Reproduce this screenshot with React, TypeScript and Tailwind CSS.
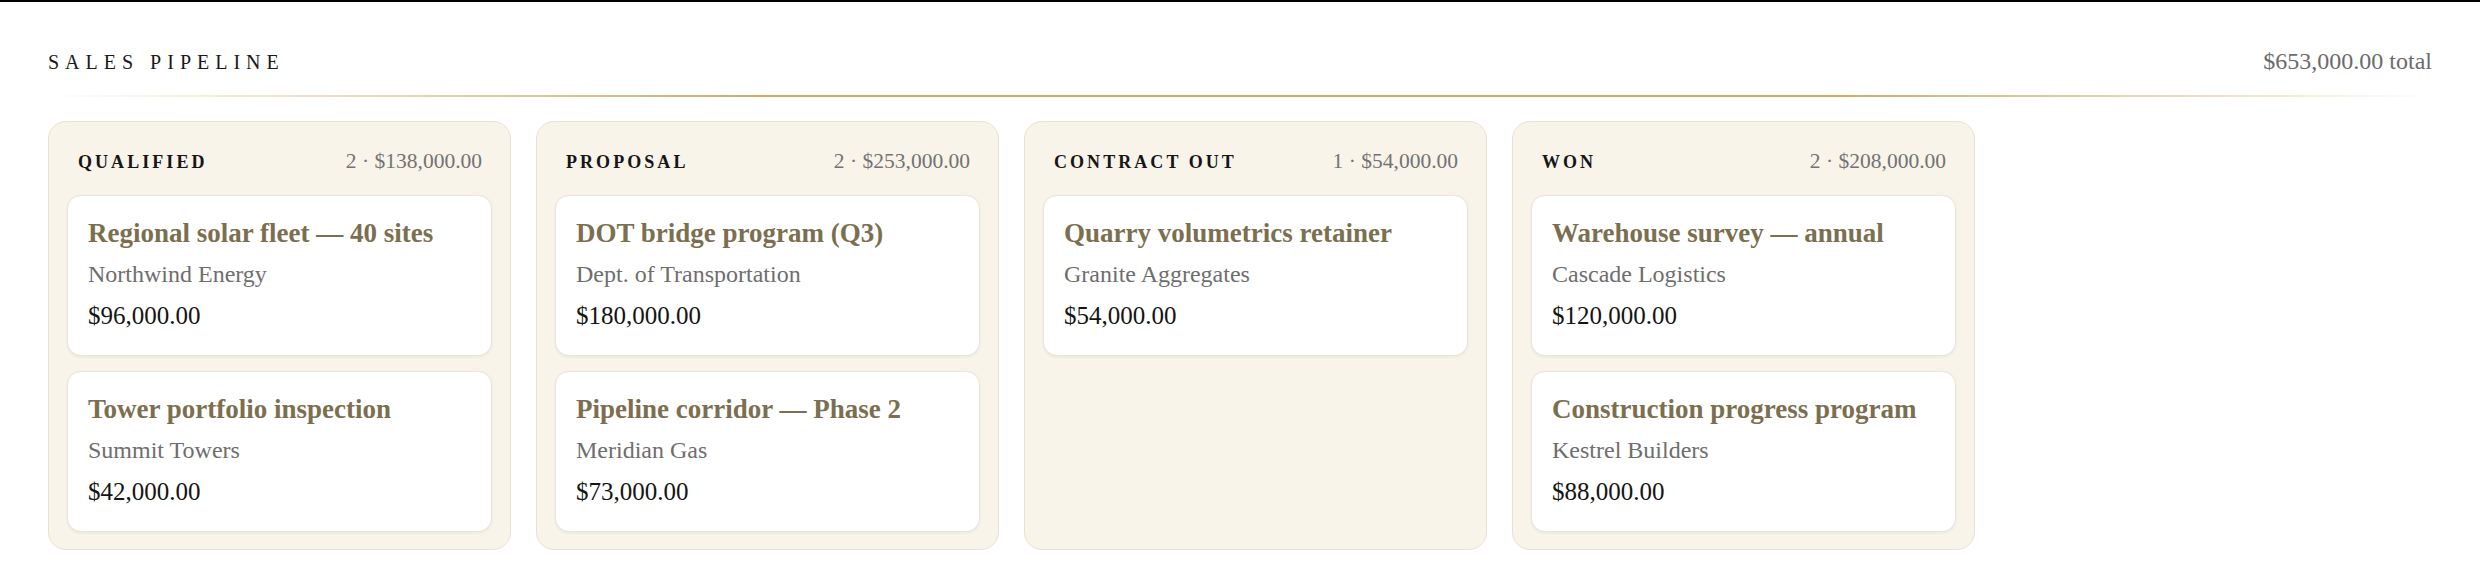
import React from 'react';

interface Deal {
  id: string;
  title: string;
  company: string;
  value: number;
}

interface Stage {
  id: string;
  name: string;
  deals: Deal[];
}

const stages: Stage[] = [
  {
    id: 'qualified',
    name: 'Qualified',
    deals: [
      { id: 'd1', title: 'Regional solar fleet — 40 sites', company: 'Northwind Energy', value: 96000 },
      { id: 'd2', title: 'Tower portfolio inspection', company: 'Summit Towers', value: 42000 },
    ],
  },
  {
    id: 'proposal',
    name: 'Proposal',
    deals: [
      { id: 'd3', title: 'DOT bridge program (Q3)', company: 'Dept. of Transportation', value: 180000 },
      { id: 'd4', title: 'Pipeline corridor — Phase 2', company: 'Meridian Gas', value: 73000 },
    ],
  },
  {
    id: 'contract',
    name: 'Contract out',
    deals: [
      { id: 'd5', title: 'Quarry volumetrics retainer', company: 'Granite Aggregates', value: 54000 },
    ],
  },
  {
    id: 'won',
    name: 'Won',
    deals: [
      { id: 'd6', title: 'Warehouse survey — annual', company: 'Cascade Logistics', value: 120000 },
      { id: 'd7', title: 'Construction progress program', company: 'Kestrel Builders', value: 88000 },
    ],
  },
];

const money = (n: number) =>
  '$' + n.toLocaleString('en-US', { minimumFractionDigits: 2, maximumFractionDigits: 2 });

function DealCard({ deal }: { deal: Deal }) {
  return (
    <div className="rounded-[14px] border border-[#ebe6d8] bg-white p-5 shadow-[0_1px_3px_rgba(60,50,20,0.08)]">
      <div className="text-[27px] font-bold leading-[34px] text-[#7b6f4f]">{deal.title}</div>
      <div className="mt-[6px] text-[24px] leading-[36px] text-[#6e6e6e]">{deal.company}</div>
      <div className="mt-[5px] text-[25px] leading-[38px] text-[#141414]">{money(deal.value)}</div>
    </div>
  );
}

function StageColumn({ stage }: { stage: Stage }) {
  const total = stage.deals.reduce((s, d) => s + d.value, 0);
  return (
    <div className="flex w-[463px] shrink-0 flex-col rounded-[18px] border border-[#e7e1cf] bg-[#f8f4ea] px-[18px] pt-[18px] pb-[17px]">
      <div className="flex items-baseline justify-between pl-[11px] pr-[10px] pt-[5px] pb-[17px]">
        <span className="text-[18px] font-bold uppercase leading-[27px] tracking-[0.17em] text-[#161616]">
          {stage.name}
        </span>
        <span className="text-[21.5px] leading-[33px] text-[#737373]">
          {stage.deals.length} · {money(total)}
        </span>
      </div>
      <div className="flex flex-col gap-[15px]">
        {stage.deals.map((d) => (
          <DealCard key={d.id} deal={d} />
        ))}
      </div>
    </div>
  );
}

export default function App() {
  const grand = stages.reduce((s, st) => s + st.deals.reduce((a, d) => a + d.value, 0), 0);

  return (
    <div className="min-h-[588px] bg-white font-['Liberation_Serif','Times_New_Roman',serif]">
      <div className="h-[2px] bg-black" />
      <div className="px-[48px] pt-[40px]">
        <div className="flex items-baseline justify-between">
          <h1 className="text-[20px] font-normal uppercase leading-[30px] tracking-[0.3em] text-[#1a1a1a]">
            Sales Pipeline
          </h1>
          <span className="text-[24px] leading-[39px] text-[#6b6b6b]">{money(grand)} total</span>
        </div>
        <div className="mt-[14px] h-[2px] bg-[linear-gradient(to_right,transparent,#cdab64_30%,#cdab64_75%,transparent)]" />
        <div className="mt-[24px] flex items-stretch gap-[25px]">
          {stages.map((st) => (
            <StageColumn key={st.id} stage={st} />
          ))}
        </div>
      </div>
    </div>
  );
}
